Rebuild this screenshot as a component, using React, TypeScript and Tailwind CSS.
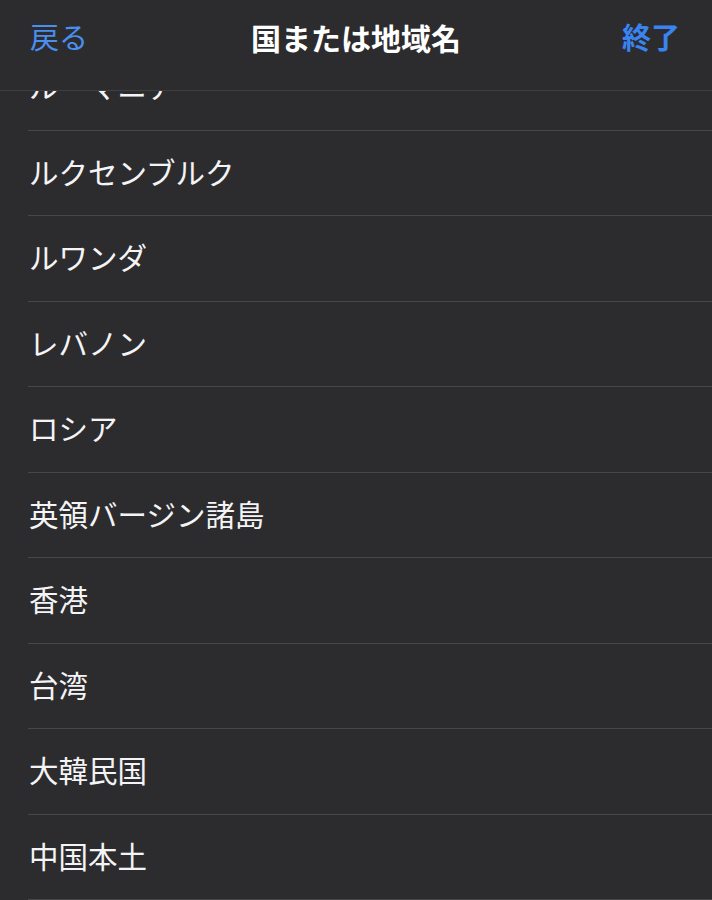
import React from "react";

const items = [
  "ルーマニア",
  "ルクセンブルク",
  "ルワンダ",
  "レバノン",
  "ロシア",
  "英領バージン諸島",
  "香港",
  "台湾",
  "大韓民国",
  "中国本土",
];

export default function App() {
  return (
    <div
      className="relative h-[900px] w-[712px] overflow-hidden bg-[#2c2c2e]"
      style={{ fontFamily: '"Noto Sans CJK JP", "Noto Sans", sans-serif' }}
    >
      <header className="absolute inset-x-0 top-0 z-10 h-[91px] border-b border-[#3f3f42] bg-[#2c2c2e]">
        <div className="relative flex h-[73px] items-center justify-between pl-[30px] pr-[32px]">
          <span className="text-[29px] leading-none text-[#4a8ef0]">戻る</span>
          <span className="absolute left-1/2 -translate-x-1/2 text-[30px] font-bold leading-none text-white">
            国または地域名
          </span>
          <span className="text-[29px] font-bold leading-none text-[#3a84f2]">終了</span>
        </div>
      </header>
      <ul className="pt-[45px]">
        {items.map((name) => (
          <li key={name} className="pl-[28px]">
            <div className="flex h-[85.5px] items-center border-b border-[#47474a] pb-[3px] pl-[1px] text-[29.5px] leading-none text-[#f4f4f6]">
              {name}
            </div>
          </li>
        ))}
      </ul>
    </div>
  );
}
